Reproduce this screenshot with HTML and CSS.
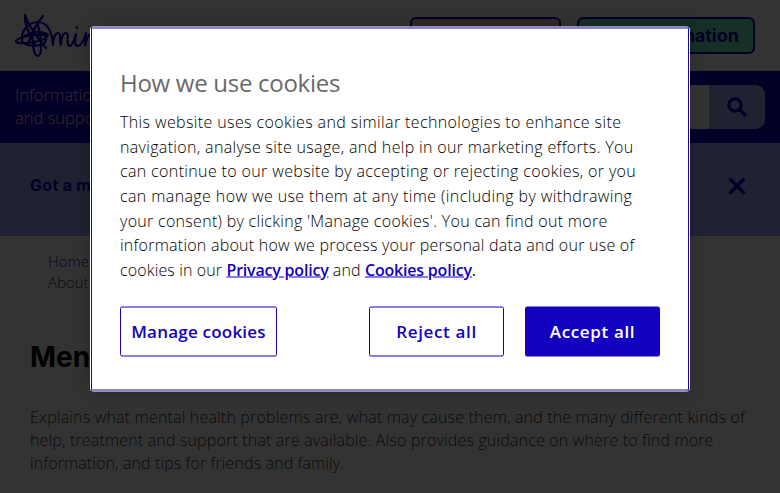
FILE: index.html
```html
<!DOCTYPE html>
<html lang="en">
<head>
<meta charset="utf-8">
<title>Mental health problems</title>
<link rel="stylesheet" href="styles.css">
</head>
<body>
<header class="top">
  <svg class="logo" viewBox="0 0 100 46" width="100" height="46">
    <path d="M10 1C14 13 23 25 31 34M28 2C23 8 18 16 14 27M33 21C20 20 5 22 1 27C0 31 20 29 29 25C35 21 33 19 25 18C14 18 6 23 7 27C9 33 29 34 31 26C32 19 24 16 17 19M10 1C9 9 15 22 20 30M7 26C6 16 14 8 24 8C33 9 37 18 38 31M18 15C17 27 18 42 23 42C28 41 26 24 23 11M38 31C38 25 40 19 43 19C47 19 44 31 46 31C46 31 46 19 51 19C55 19 50 32 55 32C58 31 60 24 61 20C60 27 59 32 63 32C67 31 69 26 71 19L70 32C71 25 74 19 78 19C83 19 78 32 84 31M62 13L62 14"/>
  </svg>
  <div class="top-actions">
    <a class="btn donate">Donate</a>
    <a class="btn info">Get information</a>
  </div>
</header>
<div class="searchbar">
  <p class="tagline"><span>Information</span><span>and support</span></p>
  <div class="search"><div class="field"></div><div class="go">
    <svg width="20" height="20" viewBox="0 0 20 20"><circle cx="8" cy="8" r="6.2"/><path d="M12.7 12.7L18 18"/></svg>
  </div></div>
</div>
<div class="notice"><strong>Got a minute?</strong>
  <svg width="18" height="18" viewBox="0 0 18 18"><path d="M1.5 1.5L16.5 16.5M16.5 1.5L1.5 16.5"/></svg>
</div>
<main>
  <nav class="crumbs"><a>Home</a><span>About</span></nav>
  <h1>Mental health</h1>
  <p class="intro"><span class="i1">Explains what mental health problems are, what may cause them, and the many different kinds of</span><span class="i2">help, treatment and support that are available. Also provides guidance on where to find more</span><span class="i3">information, and tips for friends and family.</span></p>
</main>
<div class="overlay"></div>
<section class="modal" role="dialog">
  <div class="modal-body">
    <h2>How we use cookies</h2>
    <p class="copy"><span class="c1">This website uses cookies and similar technologies to enhance site</span><span class="c2">navigation, analyse site usage, and help in our marketing efforts. You</span><span class="c3">can continue to our website by accepting or rejecting cookies, or you</span><span class="c4">can manage how we use them at any time (including by withdrawing</span><span class="c5">your consent) by clicking 'Manage cookies'. You can find out more</span><span class="c6">information about how we process your personal data and our use of</span><span class="c7">cookies in our <a>Privacy policy</a> and <a>Cookies policy</a><b>.</b></span></p>
    <div class="choices">
      <button class="manage">Manage cookies</button>
      <button class="reject">Reject all</button>
      <button class="accept">Accept all</button>
    </div>
  </div>
</section>
</body>
</html>
```

FILE: styles.css
```css
* { box-sizing: border-box; }
body { margin: 0; height: 493px; overflow: hidden; position: relative; background: #fff; color: #333; font: 300 16px/23px "Open Sans", sans-serif; }
p, h1, h2 { margin: 0; }
p > span { display: block; white-space: nowrap; width: max-content; }
.top { height: 71px; display: flex; justify-content: space-between; padding: 14px 25px 0 15px; }
.logo { fill: none; stroke: #1300c1; stroke-width: 2.2; stroke-linecap: round; stroke-linejoin: round; }
.top-actions { display: flex; gap: 16px; padding-top: 3px; }
.btn { height: 37px; border: 2px solid #1300c1; border-radius: 6px; color: #1300c1; font: 700 18px/33px Inter, sans-serif; text-align: center; }
.donate { width: 151px; background: #ffcac6; }
.info { width: 178px; background: #6eebc3; text-align: right; padding-right: 14px; white-space: nowrap; }
.searchbar { height: 72px; background: #1300c1; display: flex; justify-content: space-between; padding: 14px 15px 14px; }
.tagline { color: #ffcac6; font-size: 16.5px; margin-top: -2px; }
.search { display: flex; width: 450px; height: 44px; border-radius: 10px; overflow: hidden; background: #fff; }
.field { flex: 1; }
.go { width: 56px; background: #9fabf9; display: flex; align-items: center; justify-content: center; }
.go svg, .notice svg { fill: none; stroke: #1300c1; stroke-width: 3.2; stroke-linecap: round; }
.notice { height: 93px; background: #9fabf9; color: #1300c1; display: flex; justify-content: space-between; padding: 30px 34px 0 30px; font: 700 16px/23px Inter, sans-serif; }
.notice strong { font-weight: 700; letter-spacing: .3px; margin-top: 1px; }
.notice svg { margin-top: 4px; stroke-width: 3.5; stroke-linecap: butt; }
main { padding: 15px 30px 0; }
.crumbs { display: flex; flex-direction: column; padding-left: 18px; font-size: 15px; line-height: 21px; }
.crumbs a { color: #1300c1; }
h1 { margin-top: 45px; color: #000; font: 700 28px/38px Inter, sans-serif; }
.intro { margin-top: 30px; }
.i1 { letter-spacing: .18px; }
.i2 { letter-spacing: .163px; }
.i3 { letter-spacing: .11px; }
.overlay { position: absolute; inset: 0; background: rgba(0,0,0,.8); }
.modal { position: absolute; left: 90px; top: 26px; width: 600px; height: 365px; transform: translateY(.5px); background: #fff; border: 1px solid #fff; border-radius: 3px; box-shadow: 0 0 18px rgba(0,0,0,.2); }
.modal-body { height: 363px; border: 1px solid #1300c1; padding: 38px 28px 0; }
h2 { color: #696969; font: 500 24px/32px "Open Sans", sans-serif; letter-spacing: -.28px; width: max-content; }
.copy { margin-top: 11px; color: #000; font-size: 16px; line-height: 24.65px; }
.copy a { color: #1300c1; font-weight: 600; letter-spacing: -.2px; text-decoration: underline; }
.copy b { font-weight: 400; }
.c1 { letter-spacing: .38px; }
.c2 { letter-spacing: .333px; }
.c3 { letter-spacing: .36px; }
.c4 { letter-spacing: .395px; }
.c5 { letter-spacing: .295px; }
.c6 { letter-spacing: .243px; }
.c7 { letter-spacing: .13px; }
.choices { display: flex; margin-top: 24.4px; }
button { height: 50px; border: 1px solid #1300c1; border-radius: 2px; background: #fff; color: #1300c1; font: 600 17px/48px "Open Sans", sans-serif; letter-spacing: .65px; padding: 0; white-space: nowrap; }
.manage { width: 157px; margin-right: auto; letter-spacing: .22px; }
.reject, .accept { width: 135px; }
.accept { margin-left: 21px; background: #1300c1; color: #fff; }
```
